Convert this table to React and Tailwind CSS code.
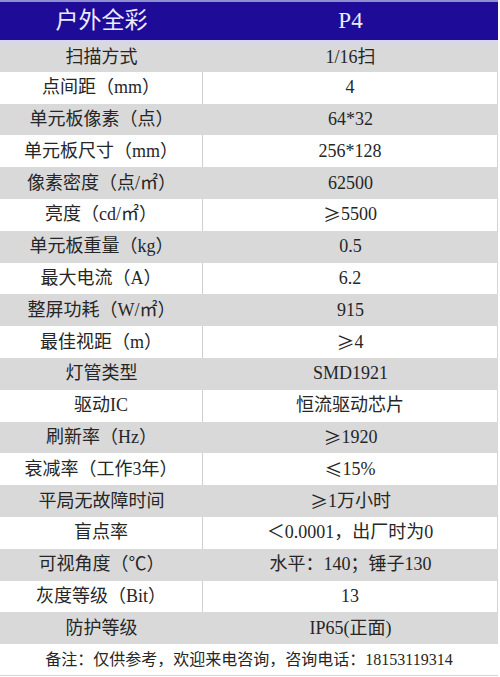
import React from 'react'

const rows = [
  ["扫描方式", "1/16扫"],
  ["点间距（mm）", "4"],
  ["单元板像素（点）", "64*32"],
  ["单元板尺寸（mm）", "256*128"],
  ["像素密度（点/㎡）", "62500"],
  ["亮度（cd/㎡）", "≥5500"],
  ["单元板重量（kg）", "0.5"],
  ["最大电流（A）", "6.2"],
  ["整屏功耗（W/㎡）", "915"],
  ["最佳视距（m）", "≥4"],
  ["灯管类型", "SMD1921"],
  ["驱动IC", "恒流驱动芯片"],
  ["刷新率（Hz）", "≥1920"],
  ["衰减率（工作3年）", "≤15%"],
  ["平局无故障时间", "≥1万小时"],
  ["盲点率", "＜0.0001，出厂时为0"],
  ["可视角度（℃）", "水平：140；锤子130"],
  ["灰度等级（Bit）", "13"],
  ["防护等级", "IP65(正面)"],
]

const font = { fontFamily: '"Liberation Serif", "Noto Sans CJK SC", serif' }
const cjk = { fontFamily: '"Noto Sans CJK SC", sans-serif' }

// the ≥ / ≤ signs are full width in the picture
const Value = ({ text }) => {
  const first = text[0]
  if (first === "≥" || first === "≤") {
    return (
      <>
        <span style={cjk}>{first}</span>
        {text.slice(1)}
      </>
    )
  }
  return text
}

const App = () => {
  return (
    <div className="w-[500px] h-[677px] bg-white overflow-hidden" style={font}>
      <div className="w-[498px]">
        <div className="flex h-[40px] bg-[#1e0b98] border-t-2 border-[#8f8fd0] text-[#ecebff] text-[23px]">
          <div className="w-[203px] flex items-center justify-center">户外全彩</div>
          <div className="flex-1 flex items-center justify-center">P4</div>
        </div>

        {rows.map((r, i) => (
          <div
            key={i}
            className={
              "flex h-[31.8px] text-[18px] text-[#262626] " +
              (i % 2 === 0 ? "bg-[#d9d9d9]" : "bg-white border-r border-[#d4d4d4]") +
              (i === 0 ? " border-t-[3px] border-[#d7d6ec]" : "")
            }
          >
            <div
              className={
                "w-[203px] flex items-center justify-center whitespace-nowrap " +
                (i % 2 === 0 ? "" : "border-r border-[#d0d0d0]")
              }
            >
              {r[0]}
            </div>
            <div className="flex-1 flex items-center justify-center whitespace-nowrap">
              <Value text={r[1]} />
            </div>
          </div>
        ))}

        <div className="flex h-[32px] items-center justify-center text-[16px] text-[#262626] bg-white border-b border-[#d4d4d4] whitespace-nowrap">
          备注：仅供参考，欢迎来电咨询，咨询电话：18153119314
        </div>
      </div>
    </div>
  )
}

export default App
